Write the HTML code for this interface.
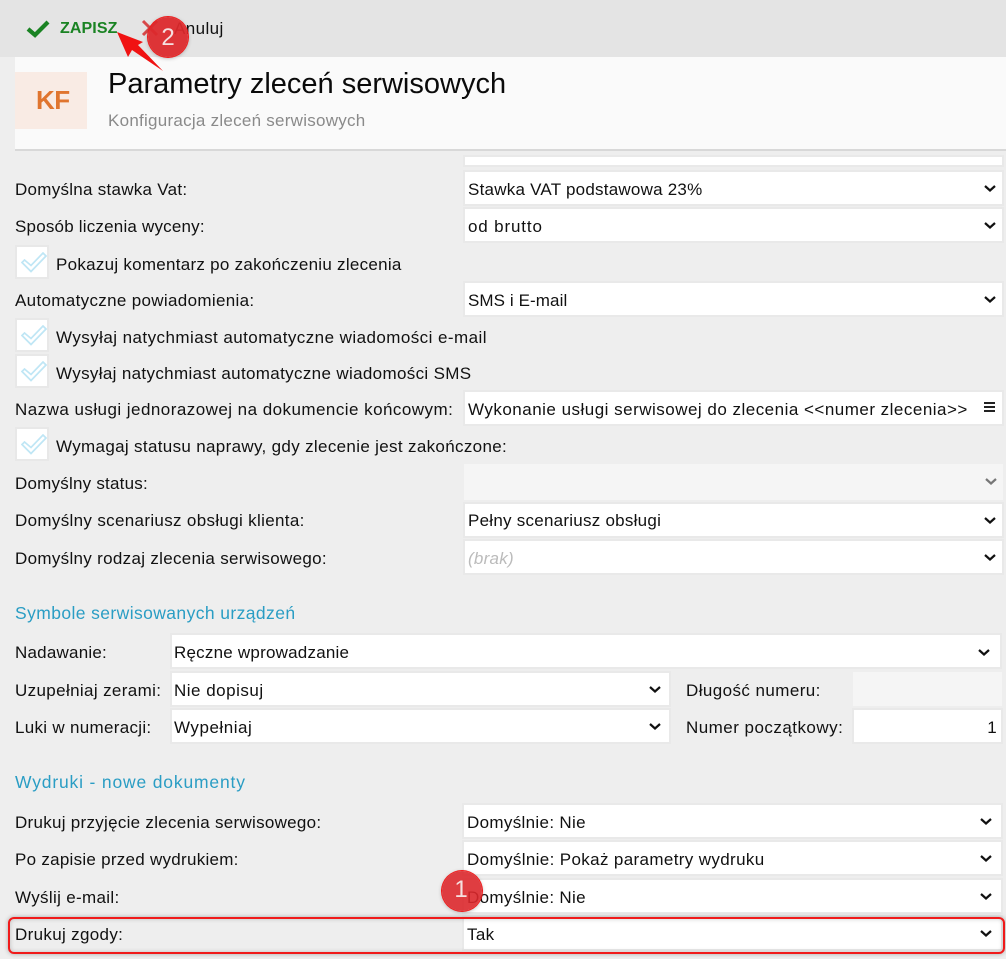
<!DOCTYPE html>
<html lang="pl"><head><meta charset="utf-8"><title>Parametry zleceń serwisowych</title>
<style>
html,body{margin:0;padding:0}
body{width:1006px;height:959px;position:relative;overflow:hidden;background:#eee;font-family:"Liberation Sans",sans-serif;font-size:17px;letter-spacing:.33px;color:#111}
.t{position:absolute;white-space:nowrap;line-height:20px;height:20px;margin-top:1px}
.b{position:absolute;background:#fff;box-shadow:0 0 0 2px #e9e9e9;height:32px}
.h{color:#2a9dc4;font-size:17.5px}
.c{position:absolute;width:30px;height:30px;left:17px;background:#fff;box-shadow:0 0 0 2px #e8e8e8}
.c svg{position:absolute;left:4px;top:5px}
.v{position:absolute}
</style></head><body>
<div style="position:absolute;left:0;top:0;width:1006px;height:57px;background:#e4e4e4"></div>
<svg class="v" style="left:26px;top:20px" width="24" height="18" viewBox="0 0 24 18"><path d="M2 9l7 6L22 2" fill="none" stroke="#1a8323" stroke-width="4.2"/></svg>
<div class="t" style="left:60px;top:18px;color:#1a8323;font-weight:bold;font-size:16px;letter-spacing:.1px">ZAPISZ</div>
<svg class="v" style="left:141px;top:19px" width="18" height="18" viewBox="0 0 18 18"><path d="M2 2l14 14M16 2L2 16" stroke="#d8494a" stroke-width="3"/></svg>
<div class="t" style="left:174px;top:18px;letter-spacing:.4px">Anuluj</div>

<div style="position:absolute;left:15px;top:57px;width:991px;height:92px;background:#fafafa;border-bottom:2px solid #d8d8d8"></div>
<div style="position:absolute;left:15px;top:72px;width:72px;height:57px;background:#f9ebe4"></div>
<div class="t" style="left:36px;top:86px;color:#e0752f;font-size:26px;line-height:26px;height:26px;font-weight:bold;letter-spacing:-.5px">KF</div>
<div class="t" style="left:108px;top:66px;font-size:29px;line-height:34px;height:34px;letter-spacing:0;color:#0a0a0a">Parametry zleceń serwisowych</div>
<div class="t" style="left:108px;top:110px;color:#8a8a8a;letter-spacing:.26px">Konfiguracja zleceń serwisowych</div>

<div class="b" style="left:465px;top:157px;width:537px;height:8px"></div>

<div class="t" style="left:15px;top:179px;letter-spacing:.27px">Domyślna stawka Vat:</div>
<div class="b" style="left:465px;top:172px;width:537px"></div>
<div class="t" style="left:468px;top:179px;letter-spacing:.23px">Stawka VAT podstawowa 23%</div>
<svg class="v" style="left:983px;top:184px" width="14" height="9" viewBox="0 0 14 9"><path d="M2 2l5 4.5L12 2" fill="none" stroke="#111" stroke-width="2.2"/></svg>

<div class="t" style="left:15px;top:216px;letter-spacing:.2px">Sposób liczenia wyceny:</div>
<div class="b" style="left:465px;top:209px;width:537px"></div>
<div class="t" style="left:468px;top:216px;letter-spacing:.85px">od brutto</div>
<svg class="v" style="left:983px;top:221px" width="14" height="9" viewBox="0 0 14 9"><path d="M2 2l5 4.5L12 2" fill="none" stroke="#111" stroke-width="2.2"/></svg>

<div class="c" style="top:247px"><svg width="26" height="21" viewBox="0 0 26 21"><path d="M1 10.5L3.5 8 10 13.5 22 1 25 4 10 19.5Z" fill="none" stroke="#bfe6f5" stroke-width="1.7"/></svg></div>
<div class="t" style="left:56px;top:254px;letter-spacing:.27px">Pokazuj komentarz po zakończeniu zlecenia</div>

<div class="t" style="left:15px;top:290px">Automatyczne powiadomienia:</div>
<div class="b" style="left:465px;top:283px;width:537px"></div>
<div class="t" style="left:468px;top:290px;letter-spacing:.09px">SMS i E-mail</div>
<svg class="v" style="left:983px;top:295px" width="14" height="9" viewBox="0 0 14 9"><path d="M2 2l5 4.5L12 2" fill="none" stroke="#111" stroke-width="2.2"/></svg>

<div class="c" style="top:320px"><svg width="26" height="21" viewBox="0 0 26 21"><path d="M1 10.5L3.5 8 10 13.5 22 1 25 4 10 19.5Z" fill="none" stroke="#bfe6f5" stroke-width="1.7"/></svg></div>
<div class="t" style="left:56px;top:327px;letter-spacing:.44px">Wysyłaj natychmiast automatyczne wiadomości e-mail</div>
<div class="c" style="top:356px"><svg width="26" height="21" viewBox="0 0 26 21"><path d="M1 10.5L3.5 8 10 13.5 22 1 25 4 10 19.5Z" fill="none" stroke="#bfe6f5" stroke-width="1.7"/></svg></div>
<div class="t" style="left:56px;top:363px;letter-spacing:.34px">Wysyłaj natychmiast automatyczne wiadomości SMS</div>

<div class="t" style="left:15px;top:399px;letter-spacing:.46px">Nazwa usługi jednorazowej na dokumencie końcowym:</div>
<div class="b" style="left:465px;top:392px;width:537px"></div>
<div class="t" style="left:468px;top:399px;letter-spacing:.49px">Wykonanie usługi serwisowej do zlecenia &lt;&lt;numer zlecenia&gt;&gt;</div>
<div style="position:absolute;left:984px;top:402px;width:11px;height:2px;background:#222;box-shadow:0 4px 0 #222,0 8px 0 #222"></div>

<div class="c" style="top:429px"><svg width="26" height="21" viewBox="0 0 26 21"><path d="M1 10.5L3.5 8 10 13.5 22 1 25 4 10 19.5Z" fill="none" stroke="#bfe6f5" stroke-width="1.7"/></svg></div>
<div class="t" style="left:56px;top:436px">Wymagaj statusu naprawy, gdy zlecenie jest zakończone:</div>

<div class="t" style="left:15px;top:473px;letter-spacing:.22px">Domyślny status:</div>
<div class="b" style="left:464px;top:464px;width:539px;height:36px;background:#f5f5f5;box-shadow:none"></div>
<svg class="v" style="left:984px;top:477px" width="14" height="9" viewBox="0 0 14 9"><path d="M2 2l5 4.5L12 2" fill="none" stroke="#777" stroke-width="2.2"/></svg>

<div class="t" style="left:15px;top:510px">Domyślny scenariusz obsługi klienta:</div>
<div class="b" style="left:465px;top:504px;width:537px"></div>
<div class="t" style="left:468px;top:510px;letter-spacing:.25px">Pełny scenariusz obsługi</div>
<svg class="v" style="left:983px;top:516px" width="14" height="9" viewBox="0 0 14 9"><path d="M2 2l5 4.5L12 2" fill="none" stroke="#111" stroke-width="2.2"/></svg>

<div class="t" style="left:15px;top:548px;letter-spacing:.31px">Domyślny rodzaj zlecenia serwisowego:</div>
<div class="b" style="left:465px;top:541px;width:537px"></div>
<div class="t" style="left:468px;top:548px;color:#bbb;font-style:italic;letter-spacing:.25px">(brak)</div>
<svg class="v" style="left:983px;top:553px" width="14" height="9" viewBox="0 0 14 9"><path d="M2 2l5 4.5L12 2" fill="none" stroke="#111" stroke-width="2.2"/></svg>

<div class="t h" style="left:15px;top:602px;letter-spacing:.4px">Symbole serwisowanych urządzeń</div>

<div class="t" style="left:15px;top:642px;letter-spacing:.22px">Nadawanie:</div>
<div class="b" style="left:172px;top:635px;width:828px"></div>
<div class="t" style="left:174px;top:642px;letter-spacing:.22px">Ręczne wprowadzanie</div>
<svg class="v" style="left:977px;top:648px" width="14" height="9" viewBox="0 0 14 9"><path d="M2 2l5 4.5L12 2" fill="none" stroke="#111" stroke-width="2.2"/></svg>

<div class="t" style="left:15px;top:680px;letter-spacing:.36px">Uzupełniaj zerami:</div>
<div class="b" style="left:172px;top:673px;width:497px"></div>
<div class="t" style="left:174px;top:680px;letter-spacing:.5px">Nie dopisuj</div>
<svg class="v" style="left:648px;top:685px" width="14" height="9" viewBox="0 0 14 9"><path d="M2 2l5 4.5L12 2" fill="none" stroke="#111" stroke-width="2.2"/></svg>
<div class="t" style="left:686px;top:680px;letter-spacing:.42px">Długość numeru:</div>
<div class="b" style="left:853px;top:672px;width:149px;height:34px;background:#f5f5f5;box-shadow:none"></div>

<div class="t" style="left:15px;top:717px;letter-spacing:.3px">Luki w numeracji:</div>
<div class="b" style="left:172px;top:710px;width:497px"></div>
<div class="t" style="left:174px;top:717px;letter-spacing:.53px">Wypełniaj</div>
<svg class="v" style="left:648px;top:722px" width="14" height="9" viewBox="0 0 14 9"><path d="M2 2l5 4.5L12 2" fill="none" stroke="#111" stroke-width="2.2"/></svg>
<div class="t" style="left:686px;top:717px;letter-spacing:.47px">Numer początkowy:</div>
<div class="b" style="left:854px;top:710px;width:147px"></div>
<div class="t" style="right:9px;top:717px">1</div>

<div class="t h" style="left:15px;top:771px;letter-spacing:.83px">Wydruki - nowe dokumenty</div>

<div class="t" style="left:15px;top:812px;letter-spacing:.28px">Drukuj przyjęcie zlecenia serwisowego:</div>
<div class="b" style="left:464px;top:805px;width:537px"></div>
<div class="t" style="left:467px;top:812px">Domyślnie: Nie</div>
<svg class="v" style="left:979px;top:817px" width="14" height="9" viewBox="0 0 14 9"><path d="M2 2l5 4.5L12 2" fill="none" stroke="#111" stroke-width="2.2"/></svg>

<div class="t" style="left:15px;top:849px;letter-spacing:.27px">Po zapisie przed wydrukiem:</div>
<div class="b" style="left:464px;top:842px;width:537px"></div>
<div class="t" style="left:467px;top:849px;letter-spacing:.36px">Domyślnie: Pokaż parametry wydruku</div>
<svg class="v" style="left:979px;top:854px" width="14" height="9" viewBox="0 0 14 9"><path d="M2 2l5 4.5L12 2" fill="none" stroke="#111" stroke-width="2.2"/></svg>

<div class="t" style="left:15px;top:887px">Wyślij e-mail:</div>
<div class="b" style="left:464px;top:880px;width:537px"></div>
<div class="t" style="left:467px;top:887px">Domyślnie: Nie</div>
<svg class="v" style="left:979px;top:892px" width="14" height="9" viewBox="0 0 14 9"><path d="M2 2l5 4.5L12 2" fill="none" stroke="#111" stroke-width="2.2"/></svg>

<div class="t" style="left:15px;top:924px">Drukuj zgody:</div>
<div class="b" style="left:464px;top:917px;width:537px"></div>
<div class="t" style="left:467px;top:924px">Tak</div>
<svg class="v" style="left:979px;top:929px" width="14" height="9" viewBox="0 0 14 9"><path d="M2 2l5 4.5L12 2" fill="none" stroke="#111" stroke-width="2.2"/></svg>

<div style="position:absolute;left:8px;top:917px;width:993px;height:33px;border:2px solid #f01a1a;border-radius:6px;box-shadow:0 0 5px rgba(0,0,0,.3),inset 0 0 5px rgba(0,0,0,.2)"></div>

<svg class="v" style="left:112px;top:28px" width="56" height="46" viewBox="0 0 56 46"><path d="M5 4L31 14 26 17 51 43 20 22 16 29Z" fill="#f01212"/></svg>
<div style="position:absolute;left:148px;top:17px;width:40px;height:40px;border-radius:50%;background:rgba(220,40,44,.94);box-shadow:0 0 0 1px #f01a1a,0 1px 4px rgba(0,0,0,.35)"></div>
<div class="t" style="left:148px;top:25px;width:40px;text-align:center;color:#f5e0e0;font-size:24px;line-height:24px;height:24px;letter-spacing:0">2</div>
<div style="position:absolute;left:442px;top:871px;width:40px;height:40px;border-radius:50%;background:rgba(220,40,44,.9);box-shadow:0 0 0 1px #f01a1a,0 1px 4px rgba(0,0,0,.35)"></div>
<div class="t" style="left:441px;top:877px;width:40px;text-align:center;color:#f5e0e0;font-size:24px;line-height:24px;height:24px;letter-spacing:0">1</div>
</body></html>
